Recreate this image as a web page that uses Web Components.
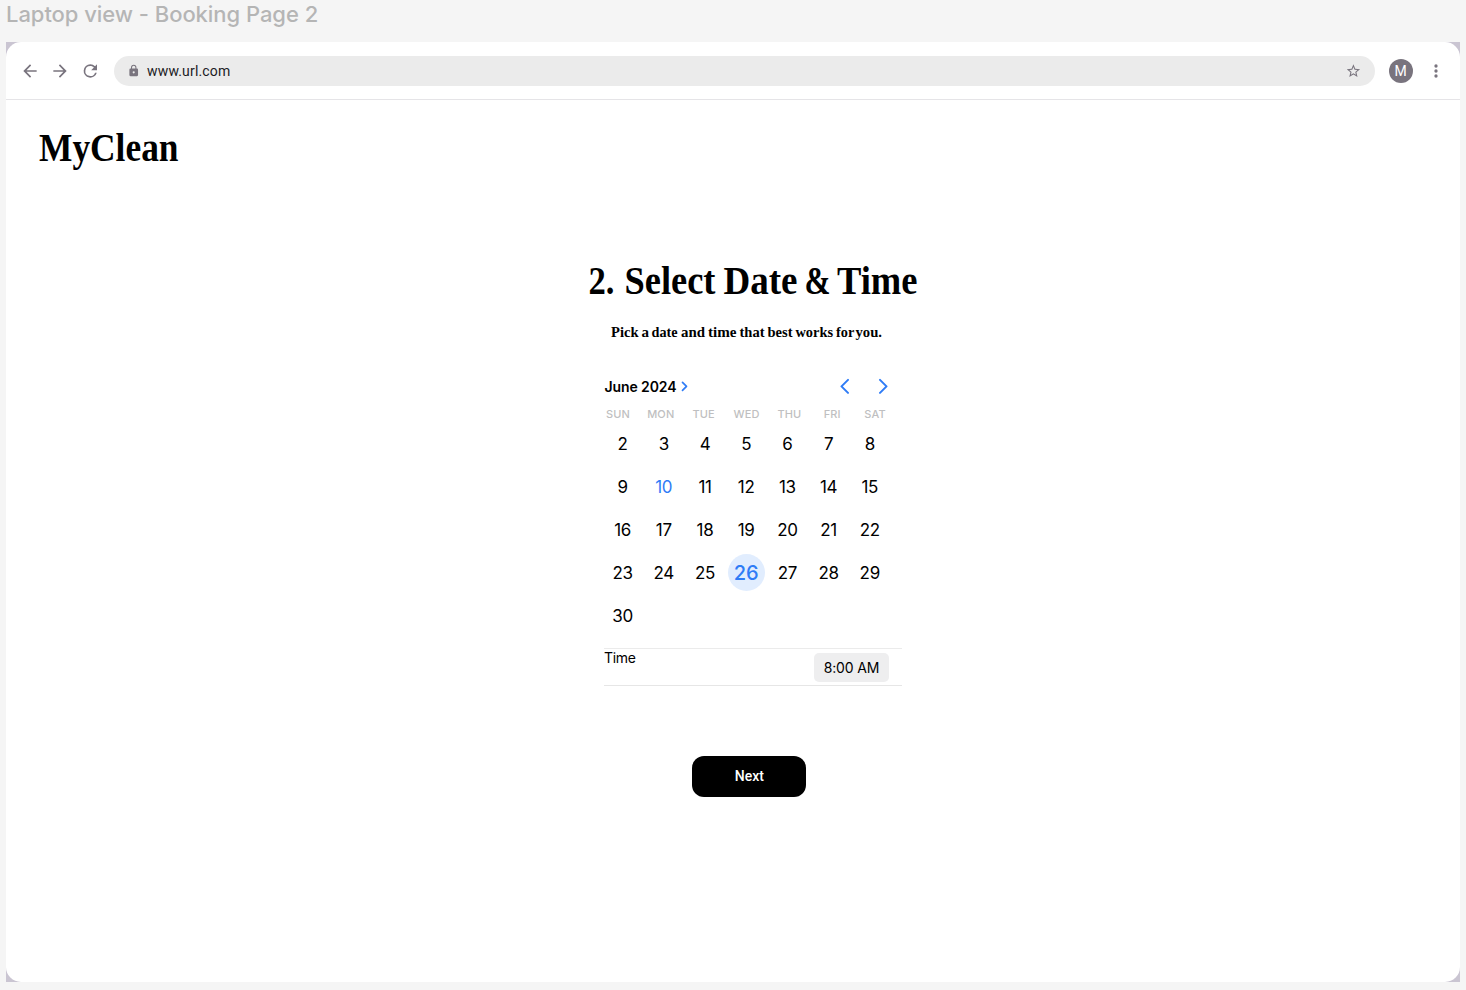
<!DOCTYPE html>
<html lang="en">
<head>
<meta charset="utf-8">
<title>MyClean - Booking</title>
<style>
html,body{margin:0;height:100%;overflow:hidden;background:#f5f5f5}
body{font-family:Inter,"Liberation Sans",sans-serif;color:#000}
</style>
</head>
<body>
<booking-frame label="Laptop view - Booking Page 2">
  <browser-bar slot="bar" url="www.url.com" initial="M"></browser-bar>
  <booking-page></booking-page>
</booking-frame>
<script>
class Base extends HTMLElement{
  constructor(){super();this.attachShadow({mode:'open'})}
  connectedCallback(){this.shadowRoot.innerHTML=this.render()}
}
customElements.define('booking-frame',class extends Base{
  render(){return `<style>
  :host{display:flex;flex-direction:column;height:990px;width:1466px;box-sizing:border-box;padding:0 6px 8px}
  .label{height:42px;line-height:28px;font-size:22px;font-weight:500;color:#b5b5b5;letter-spacing:-.05px;white-space:nowrap}
  .back{flex:1;background:#cac5d2;display:flex}
  .win{flex:1;background:#fff;border-radius:15px;display:flex;flex-direction:column;overflow:hidden}
  </style><div class="label">${this.getAttribute('label')}</div>
  <div class="back"><div class="win"><slot name="bar"></slot><slot></slot></div></div>`}
});
customElements.define('browser-bar',class extends Base{
  render(){return `<style>
  :host{display:flex;align-items:center;height:58px;box-sizing:border-box;border-bottom:1px solid #e5e4e7;padding:0 14px 0 14px;font-family:Roboto,sans-serif;color:#79747e}
  svg{display:block;fill:currentColor;flex:none}
  .nav{display:flex;gap:10px;width:94px}
  .url{flex:1;height:30px;border-radius:15px;background:#ebebeb;display:flex;align-items:center;padding:0 13px;box-sizing:border-box}
  .url span{flex:1;margin-left:7px;font-size:14px;letter-spacing:.17px;color:#1c1b1f;line-height:30px}
  .me{width:24px;height:24px;border-radius:50%;background:#79747e;color:#fff;font-size:14px;line-height:25px;text-align:center;margin:0 13.5px 0 14px}
  </style>
  <div class="nav">
  <svg width="20" height="20" viewBox="0 0 24 24"><path d="M20 11H7.83l5.59-5.59L12 4l-8 8 8 8 1.41-1.41L7.83 13H20z"/></svg>
  <svg width="20" height="20" viewBox="0 0 24 24"><path d="M12 4l-1.41 1.41L16.17 11H4v2h12.17l-5.58 5.59L12 20l8-8z"/></svg>
  <svg width="20" height="20" viewBox="-.4 0 24 24"><path d="M17.65 6.35A7.96 7.96 0 0 0 12 4a8 8 0 1 0 7.73 10h-2.08A6 6 0 1 1 12 6c1.66 0 3.14.69 4.22 1.78L13 11h7V4z"/></svg></div>
  <div class="url">
  <svg width="13" height="13" viewBox="-.4 -.4 24 24"><path d="M18 8h-1V6A5 5 0 0 0 7 6v2H6a2 2 0 0 0-2 2v10c0 1.100.9 2 2 2h12a2 2 0 0 0 2-2V10a2 2 0 0 0-2-2zm-6 9a2 2 0 1 1 0-4 2 2 0 0 1 0 4zm3.100-9H8.900V6a3.100 3.100 0 0 1 6.200 0z"/></svg>
  <span>${this.getAttribute('url')}</span>
  <svg width="16" height="16" viewBox="-.6 0 24 24" style="margin-right:.5px"><path d="M22 9.240l-7.190-.62L12 2 9.190 8.630 2 9.240l5.460 4.730L5.820 21 12 17.270 18.180 21l-1.630-7.030zM12 15.400l-3.760 2.270 1-4.280-3.320-2.880 4.380-.38L12 6.100l1.710 4.040 4.380.38-3.320 2.880 1 4.280z"/></svg>
  </div>
  <div class="me">${this.getAttribute('initial')}</div>
  <svg width="20" height="20" viewBox="0 0 24 24"><circle cx="12" cy="6" r="2"/><circle cx="12" cy="12" r="2"/><circle cx="12" cy="18" r="2"/></svg>`}
});
/* Headline with optical word fitting: words="text|start|width;..." */
customElements.define('display-text',class extends Base{
  render(){
    const a=n=>this.getAttribute(n);
    const t=a('words').split(';').map(w=>{const [s,x,l]=w.split('|');return `<tspan x="${x}" textLength="${l}" lengthAdjust="spacingAndGlyphs">${s.replace('&','&amp;')}</tspan>`}).join(' ');
    return `<style>:host{display:block}svg{display:block;overflow:visible}text{font:${a('weight')||700} ${a('size')}px "Liberation Serif",serif}</style>
    <svg width="${a('width')}" height="${a('height')}"><text y="${a('baseline')}">${t}</text></svg>`}
});
customElements.define('date-picker',class extends Base{
  render(){
    let days='';for(let d=2;d<=30;d++)days+=`<span class="${d===10?'today':d===26?'sel':''}"><b>${d}</b></span>`;
    return `<style>
  :host{display:block;width:300px}
  .head{display:flex;height:32px;align-items:center;padding-left:8.5px;color:#2f7cf6}
  .month{font-size:14px;font-weight:600;color:#000;letter-spacing:-.1px;width:72px;white-space:nowrap}
  svg{display:block;fill:none;stroke:currentColor;stroke-linecap:round;stroke-linejoin:round}
  .names{display:grid;grid-template-columns:repeat(7,42.86px);height:19.5px;line-height:25px;margin-left:.5px;font-size:11px;font-weight:500;letter-spacing:.15px;color:#bfbfc1;text-align:center}
  .days{display:grid;grid-template-columns:repeat(7,41.2px);grid-auto-rows:43px;margin-left:6px;font-size:17px;letter-spacing:-.35px}
  .days span{display:flex;align-items:center;justify-content:center}
  b{font-weight:400;padding-top:1px}
  .today{color:#2f7cf6}
  .sel b{padding:0;width:37px;height:37px;border-radius:50%;background:#e1edfe;color:#2f7cf6;font-size:20px;font-weight:500;line-height:38px;text-align:center;letter-spacing:-.1px}
  </style>
  <div class="head"><span class="month">June 2024</span>
   <svg width="9" height="12" viewBox="0 -.4 9 12" stroke-width="1.700" style="margin-left:3.500px"><path d="M2.500 2l4 4-4 4"/></svg>
   <svg width="10" height="16" viewBox="0 -.4 10 16" stroke-width="2" style="margin-left:151px"><path d="M8 1.500L1.500 8 8 14.500"/></svg>
   <svg width="10" height="16" viewBox="0 -.4 10 16" stroke-width="2" style="margin-left:28px"><path d="M2 1.500L8.500 8 2 14.500"/></svg></div>
  <div class="names">${['SUN','MON','TUE','WED','THU','FRI','SAT'].map(n=>`<span>${n}</span>`).join('')}</div>
  <div class="days">${days}</div>`}
});
customElements.define('time-row',class extends Base{
  render(){return `<style>
  :host{display:flex;justify-content:space-between;box-sizing:border-box;width:298px;height:38px;border-top:1px solid #ebebeb;border-bottom:1px solid #e6e6e6;padding:4px 13px 0 0;font-size:14px}
  .t{line-height:10px;letter-spacing:-.3px}
  .v{width:75px;height:29px;line-height:29px;border-radius:5px;background:#eeeeef;text-align:center;letter-spacing:-.15px}
  </style><span class="t"><slot></slot></span><span class="v">${this.getAttribute('value')}</span>`}
});
customElements.define('pill-button',class extends Base{
  render(){return `<style>:host{display:block}button{display:block;width:114px;height:41px;border:0;border-radius:12px;background:#000;color:#fff;font:500 14px Roboto,sans-serif;padding:0 0 1px;letter-spacing:-.05px}</style><button><slot></slot></button>`}
});
customElements.define('booking-page',class extends Base{
  render(){return `<style>
  :host{display:flex;flex-direction:column}
  .logo{padding:25px 0 0 34px;height:65px}
  .title{margin:65px 0 0 582px}
  .sub{margin:15px 0 0 604px}
  date-picker{margin:25px 0 0 590px}
  time-row{margin:11.5px 0 0 598px}
  pill-button{margin:70px 0 0 686.3px}
  </style>
  <display-text class="logo" words="MyClean|-1|139.5" size="39" width="140" height="50" baseline="36"></display-text>
  <display-text class="title" words="2.|.5|26;Select|36.5|91;Date|135.5|74;&|216.5|26;Time|249|80.5" size="40" width="330" height="50" baseline="39"></display-text>
  <display-text class="sub" words="Pick|1|27.5;a|31.5|7.5;date|41.500|26;and|71|24;time|98|28.5;that|129.5|25;best|157.5|25;works|185.5|37.5;for|226|18;you.|245.500|26.5" size="15.5" width="275" height="25" baseline="17"></display-text>
  <date-picker></date-picker>
  <time-row value="8:00 AM">Time</time-row>
  <pill-button>Next</pill-button>`}
});
</script>
</body>
</html>
